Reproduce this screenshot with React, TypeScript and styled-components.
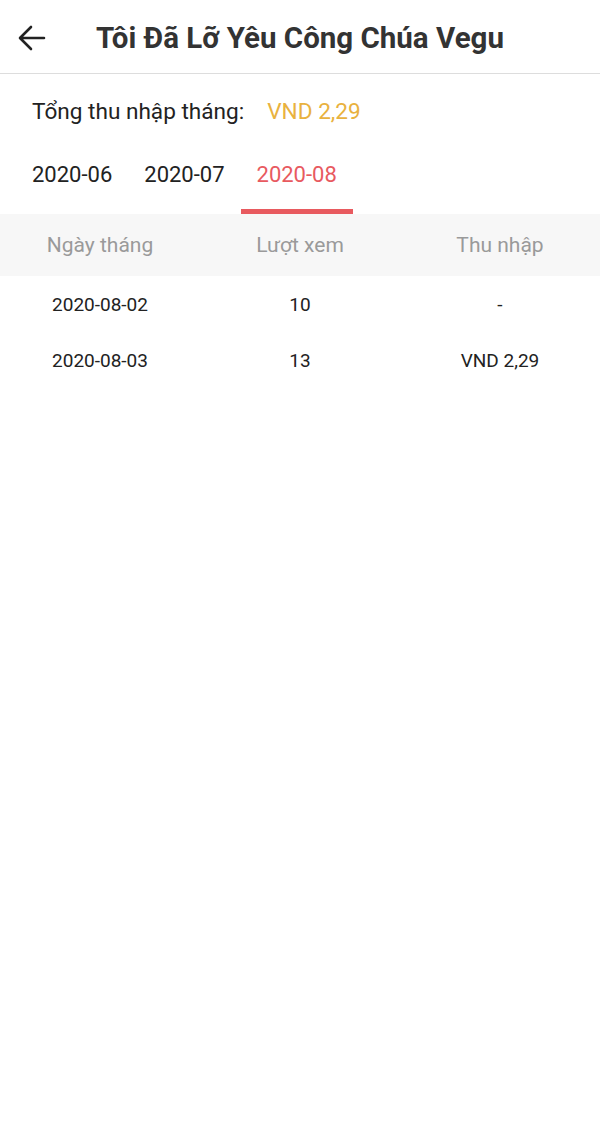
import React, { useState } from 'react';
import styled, { createGlobalStyle } from 'styled-components';

const GlobalStyle = createGlobalStyle`
  html, body {
    margin: 0;
    padding: 0;
    background: #ffffff;
    font-family: Roboto, "Noto Sans", sans-serif;
  }
`;

const Page = styled.div`
  width: 600px;
  min-height: 1147px;
  background: #fff;
`;

const Header = styled.header`
  display: flex;
  align-items: center;
  border-bottom: 1px solid #dddddd;
  box-sizing: border-box;
  height: 74px;
  padding-top: 3px;
`;

const BackButton = styled.button`
  width: 64px;
  height: 100%;
  border: 0;
  background: none;
  padding: 0 0 0 18px;
  display: flex;
  align-items: center;
  cursor: pointer;
`;

const Title = styled.h1`
  margin: 0 0 0 32px;
  font-size: 29.5px;
  font-weight: 700;
  color: #333333;
`;

const Summary = styled.div`
  display: flex;
  align-items: center;
  padding: 0 32px;
  height: 74px;
  font-size: 22.6px;
  color: #222;
`;

const Amount = styled.span`
  margin-left: 23px;
  color: #e9b23f;
`;

const Tabs = styled.div`
  display: flex;
  padding-left: 16px;
  height: 66px;
`;

const Tab = styled.button<{ $active?: boolean }>`
  position: relative;
  border: 0;
  background: none;
  padding: 0 16px 14px;
  font-family: inherit;
  font-size: 22px;
  color: ${(p) => (p.$active ? '#e85a5f' : '#222')};
  cursor: pointer;

  &::after {
    content: '';
    position: absolute;
    left: 0;
    right: 0;
    bottom: 0;
    height: 5px;
    background: ${(p) => (p.$active ? '#e85a5f' : 'transparent')};
  }
`;

const Table = styled.div`
  display: flex;
  flex-direction: column;
`;

const HeadRow = styled.div`
  display: grid;
  grid-template-columns: repeat(3, 1fr);
  align-items: center;
  height: 62px;
  background: #f7f7f7;
  font-size: 21px;
  color: #9a9a9a;
`;

const Row = styled.div`
  display: grid;
  grid-template-columns: repeat(3, 1fr);
  align-items: center;
  height: 56px;
  font-size: 19px;
  color: #222;
`;

const Cell = styled.div`
  text-align: center;
`;

const months = ['2020-06', '2020-07', '2020-08'];

const rows = [
  { date: '2020-08-02', views: 10, income: '-' },
  { date: '2020-08-03', views: 13, income: 'VND 2,29' },
];

const App: React.FC = () => {
  const [month, setMonth] = useState('2020-08');

  return (
    <Page>
      <GlobalStyle />
      <Header>
        <BackButton aria-label="back">
          <svg width="28" height="26" viewBox="0 0 28 26" fill="none">
            <path d="M26 13H3M13 2L2 13l11 11" stroke="#222" strokeWidth="2.6" strokeLinecap="round" strokeLinejoin="round" />
          </svg>
        </BackButton>
        <Title>Tôi Đã Lỡ Yêu Công Chúa Vegu</Title>
      </Header>
      <Summary>
        Tổng thu nhập tháng:
        <Amount>VND 2,29</Amount>
      </Summary>
      <Tabs>
        {months.map((m) => (
          <Tab key={m} $active={m === month} onClick={() => setMonth(m)}>{m}</Tab>
        ))}
      </Tabs>
      <Table>
        <HeadRow>
          <Cell>Ngày tháng</Cell>
          <Cell>Lượt xem</Cell>
          <Cell>Thu nhập</Cell>
        </HeadRow>
        {rows.map((r) => (
          <Row key={r.date}>
            <Cell>{r.date}</Cell>
            <Cell>{r.views}</Cell>
            <Cell>{r.income}</Cell>
          </Row>
        ))}
      </Table>
    </Page>
  );
};

export default App;
